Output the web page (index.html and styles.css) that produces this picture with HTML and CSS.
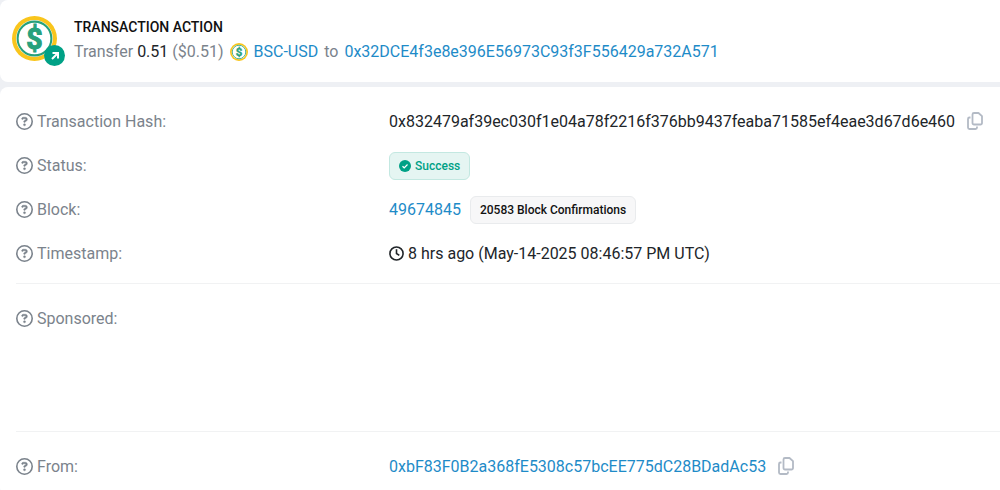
FILE: index.html
```html
<!DOCTYPE html>
<html lang="en">
<head>
    <meta charset="UTF-8">
    <meta name="viewport" content="width=device-width, initial-scale=1.0">
    <title>Transaction Details</title>
    <link rel="stylesheet" href="styles.css">
</head>
<body>

    <!-- Shared icons -->
    <svg class="sprite" aria-hidden="true">
        <symbol id="help" viewBox="0 0 512 512">
            <path fill="currentColor" d="M464 256A208 208 0 1 0 48 256a208 208 0 1 0 416 0zM0 256a256 256 0 1 1 512 0A256 256 0 1 1 0 256z"/>
            <path fill="currentColor" stroke="currentColor" stroke-width="12" d="M169.800 165.300c7.900-22.300 29.100-37.300 52.800-37.300h58.300c34.900 0 63.100 28.300 63.100 63.100c0 22.600-12.100 43.500-31.700 54.800L280 264.400c-.2 13-10.900 23.600-24 23.600c-13.300 0-24-10.700-24-24V250.500c0-8.600 4.600-16.500 12.100-20.800l44.300-25.400c4.700-2.700 7.600-7.700 7.600-13.100c0-8.400-6.800-15.100-15.100-15.100H222.600c-3.400 0-6.400 2.100-7.500 5.300l-.4 1.200c-4.400 12.500-18.200 19-30.700 14.600s-19-18.200-14.600-30.700l.4-1.200zM224 352a32 32 0 1 1 64 0 32 32 0 1 1 -64 0z"/>
        </symbol>
        <symbol id="copy" viewBox="0 0 16 18">
            <path fill="none" stroke="currentColor" stroke-width="1.800" stroke-linejoin="round" d="M7 1h4.500L15 4.200V11a1.500 1.500 0 0 1-1.500 1.500H7A1.500 1.500 0 0 1 5.500 11V2.500A1.500 1.500 0 0 1 7 1zM3.500 5.500h-1A1.500 1.500 0 0 0 1 7v8.500A1.500 1.500 0 0 0 2.500 17h6a1.500 1.500 0 0 0 1.500-1.500v-1"/>
        </symbol>
        <symbol id="coin" viewBox="0 0 44 44">
            <circle cx="22" cy="22" r="22" fill="#f9c51c"/>
            <circle cx="22" cy="22" r="18" fill="#fff"/>
            <circle cx="22" cy="22" r="16.500" fill="none" stroke="#27a17c" stroke-width="2"/>
            <text x="22" y="32" text-anchor="middle" class="coin-sign">$</text>
        </symbol>
    </svg>

    <section class="card action">
        <div class="token">
            <svg class="token-logo"><use href="#coin"/></svg>
            <span class="token-badge">
                <svg width="8" height="8" viewBox="0 0 8 8" fill="none" stroke="#fff" stroke-width="2"><path d="M1 7l6-6M1.500 1H7v5.500"/></svg>
            </span>
        </div>
        <div>
            <h1>TRANSACTION ACTION</h1>
            <p class="transfer">
                <span>Transfer <b>0.51</b> ($0.51)</span>
                <svg class="token-small"><use href="#coin"/></svg>
                <a href="#">BSC-USD</a>
                <span>to</span>
                <a href="#">0x32DCE4f3e8e396E56973C93f3F556429a732A571</a>
            </p>
        </div>
    </section>

    <section class="card details">
        <dl class="group">
            <div class="row">
                <dt><svg class="help"><use href="#help"/></svg>Transaction Hash:</dt>
                <dd>0x832479af39ec030f1e04a78f2216f376bb9437feaba71585ef4eae3d67d6e460
                    <button class="copy" type="button" aria-label="Copy hash"><svg><use href="#copy"/></svg></button></dd>
            </div>
            <div class="row">
                <dt><svg class="help"><use href="#help"/></svg>Status:</dt>
                <dd><span class="badge success">
                    <svg width="12" height="12" viewBox="0 0 12 12"><circle cx="6" cy="6" r="6" fill="#00a186"/><path d="M3.500 6.200l1.700 1.600 3.300-3.300" fill="none" stroke="#fff" stroke-width="1.200"/></svg>
                    Success</span></dd>
            </div>
            <div class="row">
                <dt><svg class="help"><use href="#help"/></svg>Block:</dt>
                <dd><a href="#">49674845</a><span class="badge">20583 Block Confirmations</span></dd>
            </div>
            <div class="row">
                <dt><svg class="help"><use href="#help"/></svg>Timestamp:</dt>
                <dd class="time"><svg class="clock" viewBox="0 0 16 16" fill="none" stroke="currentColor" stroke-width="1.700"><circle cx="8" cy="8" r="7"/><path d="M8 3.500V8l3 2"/></svg>8 hrs ago (May-14-2025 08:46:57 PM UTC)</dd>
            </div>
        </dl>
        <dl class="group sponsored">
            <div class="row">
                <dt><svg class="help"><use href="#help"/></svg>Sponsored:</dt>
                <dd></dd>
            </div>
        </dl>
        <dl class="group">
            <div class="row">
                <dt><svg class="help"><use href="#help"/></svg>From:</dt>
                <dd><a href="#">0xbF83F0B2a368fE5308c57bcEE775dC28BDadAc53</a>
                    <button class="copy" type="button" aria-label="Copy address"><svg><use href="#copy"/></svg></button></dd>
            </div>
        </dl>
    </section>

</body>
</html>
```
FILE: styles.css
```css
* {
    box-sizing: border-box;
}

body {
    font-family: Roboto, "Liberation Sans", sans-serif;
    font-size: 16px;
    line-height: 24px;
    background-color: #eef0f4;
    color: #212529;
    margin: 0;
}

a {
    color: #1e8bc8;
    text-decoration: none;
}

svg {
    flex-shrink: 0;
}

.sprite {
    display: none;
}

.card {
    background-color: #fff;
    border-radius: 8px 0 0 8px;
}

/* Transaction action */
.action {
    display: flex;
    gap: 17px;
    padding: 16px 12px 18px;
    margin-bottom: 5px;
}

.token {
    position: relative;
    width: 45px;
    height: 45px;
}

.token-logo {
    display: block;
    width: 45px;
    height: 45px;
}

.token-badge {
    position: absolute;
    right: -8px;
    bottom: -5px;
    display: flex;
    align-items: center;
    justify-content: center;
    width: 21px;
    height: 21px;
    border-radius: 50%;
    background-color: #00a186;
}

.coin-sign {
    font-size: 28px;
    font-weight: 700;
    fill: #27a17c;
    stroke: #27a17c;
    stroke-width: 1px;
}

.token-small {
    width: 18px;
    height: 18px;
}

h1 {
    margin: 0;
    font-size: 14px;
    line-height: 22px;
    font-weight: 500;
    color: #111;
}

.transfer {
    display: flex;
    align-items: center;
    gap: 6px;
    margin: 2px 0 0;
    color: #7b838c;
}

.transfer b {
    font-weight: 400;
    color: #212529;
}

/* Details */
.details {
    padding-left: 16px;
    min-height: calc(100vh - 87px);
}

.group {
    margin: 0;
    padding: 13px 0 7px;
}

.group + .group {
    border-top: 1px solid #f1f2f3;
}

.sponsored {
    min-height: 148px;
}

.row {
    display: grid;
    grid-template-columns: 373px 1fr;
    align-items: center;
    min-height: 44px;
}

dt {
    display: flex;
    align-items: center;
    gap: 4px;
    color: #7b838c;
}

dd {
    display: flex;
    align-items: center;
    gap: 9px;
    margin: 0;
}

.help {
    width: 17px;
    height: 17px;
    margin-bottom: 2px;
}

.time {
    gap: 4px;
}

.clock {
    width: 15px;
    height: 15px;
    margin-bottom: 2px;
}

.badge {
    display: inline-flex;
    align-items: center;
    gap: 4px;
    padding: 4px 9px;
    border: 1px solid #e9ebed;
    border-radius: 6px;
    background-color: #f7f7f8;
    color: #111;
    font-size: 12px;
    line-height: 18px;
    font-weight: 500;
}

.success {
    border-color: #c3e8e1;
    background-color: #e5f5f2;
    color: #00a186;
}

.copy {
    display: flex;
    margin-bottom: 2px;
    padding: 0 3px;
    border: none;
    background: none;
    color: #b3bac5;
    cursor: pointer;
}

.copy svg {
    width: 16px;
    height: 18px;
}
```
